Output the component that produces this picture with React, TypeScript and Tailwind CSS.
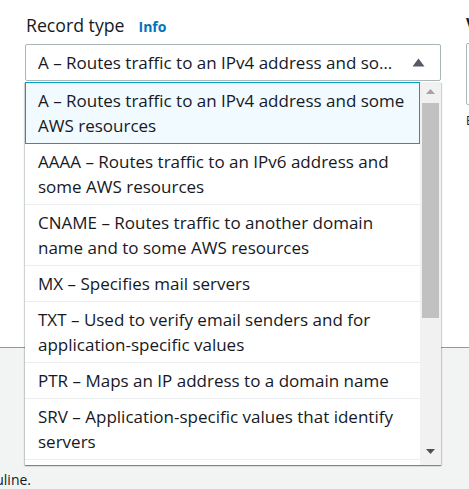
const options = [
  'A – Routes traffic to an IPv4 address and some AWS resources',
  'AAAA – Routes traffic to an IPv6 address and some AWS resources',
  'CNAME – Routes traffic to another domain name and to some AWS resources',
  'MX – Specifies mail servers',
  'TXT – Used to verify email senders and for application-specific values',
  'PTR – Maps an IP address to a domain name',
  'SRV – Application-specific values that identify servers',
  'SPF – Sender Policy Framework',
];

function Caret({ className }: { className?: string }) {
  return (
    <svg width="13" height="9" viewBox="0 0 13 9" className={className}>
      <path d="M0.5 8.5 L6.5 0.5 L12.5 8.5 Z" fill="currentColor" />
    </svg>
  );
}

function Scrollbar() {
  return (
    <div className="flex h-full w-[21px] shrink-0 flex-col bg-[#f1f1f1]">
      <div className="flex h-[21px] items-center justify-center pb-[2px]">
        <svg width="9" height="5" viewBox="0 0 9 5">
          <path d="M0 5 L4.5 0 L9 5 Z" fill="#a3a3a3" />
        </svg>
      </div>
      <div className="mx-[2px] h-[215px] bg-[#c1c1c1]" />
      <div className="flex-1" />
      <div className="flex h-[21px] items-center justify-center pb-[6px]">
        <svg width="9" height="5" viewBox="0 0 9 5">
          <path d="M0 0 L4.5 5 L9 0 Z" fill="#505050" />
        </svg>
      </div>
    </div>
  );
}

export default function App() {
  return (
    <div className="relative h-[489px] w-[469px] overflow-hidden bg-[#f2f3f3] font-['Open_Sans','Noto_Sans',sans-serif] text-[#16191f]">
      {/* White form panel */}
      <div className="flex h-[348px] gap-[25px] border-b border-[#8f9a9b] bg-white pl-[25px] pt-[14px]">
        {/* Record type */}
        <div className="w-[416px] shrink-0">
          <div className="flex h-[22px] items-baseline gap-[14px] pl-px leading-[22px]">
            <span className="text-[17.7px]">Record type</span>
            <span className="text-sm font-bold text-[#0073bb]">Info</span>
          </div>
          <div className="relative mt-[8px]">
            <div className="flex h-[37px] items-center justify-between rounded-[2px] border border-[#aab7b8] pl-3 pr-[15px]">
              <span className="truncate text-[17px]">A – Routes traffic to an IPv4 address and so…</span>
              <Caret className="ml-3 shrink-0 text-[#545b64]" />
            </div>

            {/* Open dropdown */}
            <div className="absolute left-0 top-[38px] z-10 flex h-[383px] w-[416px] overflow-hidden bg-white shadow-[0_1px_1px_0_rgba(0,28,36,0.3),1px_1px_1px_0_rgba(0,28,36,0.15),-1px_1px_1px_0_rgba(0,28,36,0.15)]">
              <ul className="min-w-0 flex-1">
                {options.map((o, i) => (
                  <li
                    key={o}
                    className={
                      i === 0
                        ? 'border border-[#00a1c9] bg-[#f1faff] px-3 py-[5px] text-[17px] leading-[25px]'
                        : 'border-b border-[#eaeded] pl-[13px] pr-3 py-[5px] text-[17px] leading-[25px]'
                    }
                  >
                    {o}
                  </li>
                ))}
              </ul>
              <Scrollbar />
            </div>
          </div>
        </div>

        {/* Value (cut off at right edge) */}
        <div className="w-[300px] shrink-0">
          <div className="h-[22px] text-base font-bold leading-[20px]">Value</div>
          <div className="mt-[7px] h-[62px] rounded-[2px] border border-[#aab7b8]" />
          <div className="mt-[8px] text-xs">Enter multiple values on separate lines.</div>
        </div>
      </div>

      {/* Gray area below */}
      <div className="mt-[122px] flex w-[31px] justify-end overflow-hidden whitespace-nowrap">
        <span className="shrink-0 text-sm leading-5">a hyphen or a guline.</span>
      </div>
    </div>
  );
}
